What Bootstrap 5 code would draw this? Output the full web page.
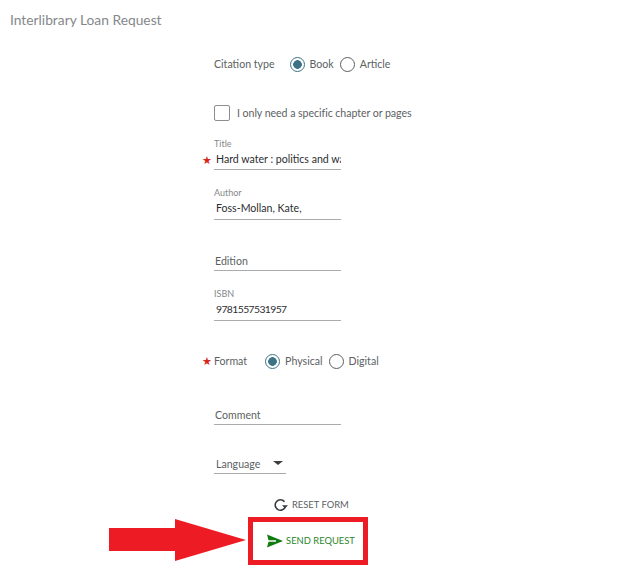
<!DOCTYPE html>
<html lang="en">
<head>
<meta charset="utf-8">
<title>Interlibrary Loan Request</title>
<link href="https://cdn.jsdelivr.net/npm/bootstrap@5.3.0/dist/css/bootstrap.min.css" rel="stylesheet">
<style>
html,body{height:568px;overflow:hidden;background:#fff}
body{font-family:Lato,"Open Sans",sans-serif;font-size:10.6px;color:#5c5f63;position:relative}
.page-title{font-size:13.8px;font-weight:400;color:#85888b;margin:0;padding:11px 0 0 10px;height:30px;line-height:18px}
.ill-form{margin-left:214px;width:240px;position:relative}
.radio-row{display:flex;align-items:center;height:18px}
.r-cite{margin-top:25px}.r-check{margin-top:31px}.r-format{margin-top:31px}
.radio-dot{width:15px;height:15px;border-radius:50%;border:1.5px solid #5b5f63;flex:none;background:#fff;display:block}
.radio-dot.is-on{border-color:#3c7285;background:radial-gradient(circle,#3c7285 0 4px,#fff 4.6px)}
.rtext{margin-left:5px;margin-right:6px;padding-top:1.5px}
.rlabel{white-space:nowrap;padding-top:1.5px}
.rlabel.tight{letter-spacing:-.05px}
.gap-cite{margin-right:15px}.gap-format{margin-right:18px}
.check-box{width:16px;height:16px;border:1.5px solid #8c8f92;border-radius:2px;flex:none;margin-right:7px}
.field{width:127px;border-bottom:1px solid #a9abad;position:relative;margin-top:17px}
.f-title{margin-top:16px}.f-edition{margin-top:33px}.f-comment{margin-top:37px}.f-lang{margin-top:32px}
.flabel{font-size:9px;line-height:12px;color:#85888b;height:12px}
.fvalue{font-size:10.6px;line-height:19px;height:20px;color:#2b2d30;padding-left:2px;white-space:nowrap;overflow:hidden}
.fvalue.v-title{height:19px;line-height:18px}
.fvalue.v-num{letter-spacing:-.6px;font-size:10.4px}
.fplace{line-height:16px;height:17px;color:#5c5f63;padding-left:1px}
.req{position:absolute;left:-12px;color:#d9261c;font-size:11px;line-height:14px}
.req-title{top:15px}.req-format{top:2px}
.lang-sel{width:72px;display:flex;align-items:center;justify-content:space-between;padding:0 2px;height:17px}
.caret-down{width:0;height:0;border-left:5px solid transparent;border-right:5px solid transparent;border-top:4px solid #3c3f42;margin-right:1px;margin-bottom:4px}
.act{font-size:9.4px;text-transform:uppercase;white-space:nowrap;background:none;border:0;padding:0;display:flex;align-items:center;gap:4px}
.act-reset{color:#5c5f63;margin-left:59px;margin-top:24px}
.act-send{color:#2a862a;gap:3px;margin-left:6px}
.send-frame{width:120px;height:48px;border:5px solid #ed1c24;display:flex;align-items:center;justify-content:center;margin-left:34px;margin-top:4px}
.arrow-note{position:absolute;left:108px;top:518px}
</style>
</head>
<body>
<h1 class="page-title">Interlibrary Loan Request</h1>
<form class="ill-form">
  <div class="radio-row r-cite">
    <span class="rlabel gap-cite">Citation type</span>
    <span class="radio-dot is-on"></span><span class="rtext">Book</span>
    <span class="radio-dot"></span><span class="rtext">Article</span>
  </div>
  <div class="radio-row r-check">
    <span class="check-box"></span><span class="rlabel tight">I only need a specific chapter or pages</span>
  </div>
  <div class="field f-title">
    <div class="flabel">Title</div>
    <span class="req req-title">★</span>
    <div class="fvalue v-title">Hard water : politics and water</div>
  </div>
  <div class="field">
    <div class="flabel">Author</div>
    <div class="fvalue">Foss-Mollan, Kate,</div>
  </div>
  <div class="field f-edition">
    <div class="fplace">Edition</div>
  </div>
  <div class="field">
    <div class="flabel">ISBN</div>
    <div class="fvalue v-num">9781557531957</div>
  </div>
  <div class="radio-row position-relative r-format">
    <span class="req req-format">★</span>
    <span class="rlabel gap-format">Format</span>
    <span class="radio-dot is-on"></span><span class="rtext">Physical</span>
    <span class="radio-dot"></span><span class="rtext">Digital</span>
  </div>
  <div class="field f-comment">
    <div class="fplace">Comment</div>
  </div>
  <div class="field lang-sel f-lang">
    <span>Language</span><span class="caret-down"></span>
  </div>
  <button type="button" class="act act-reset">
    <svg width="15" height="15" viewBox="0 0 15 15" fill="none"><path d="M12.4 8.4a5.2 5.2 0 1 1-.9-4.6" stroke="#3a3d40" stroke-width="1.6"/><path d="M9 7.2h6l-3 3.4z" fill="#3a3d40"/></svg>
    Reset form
  </button>
  <div class="send-frame">
    <button type="button" class="act act-send">
      <svg width="16" height="14" viewBox="0 0 16 14"><path d="M0 0.5 16 7 0 13.5 1.5 7.8H9V6.2H1.5z" fill="#107c10"/></svg>
      Send request
    </button>
  </div>
</form>
<svg class="arrow-note" width="141" height="44" viewBox="0 0 141 44"><path d="M1 10H67V1L138 22 67 43V33H1z" fill="#ed1c24"/></svg>
</body>
</html>
